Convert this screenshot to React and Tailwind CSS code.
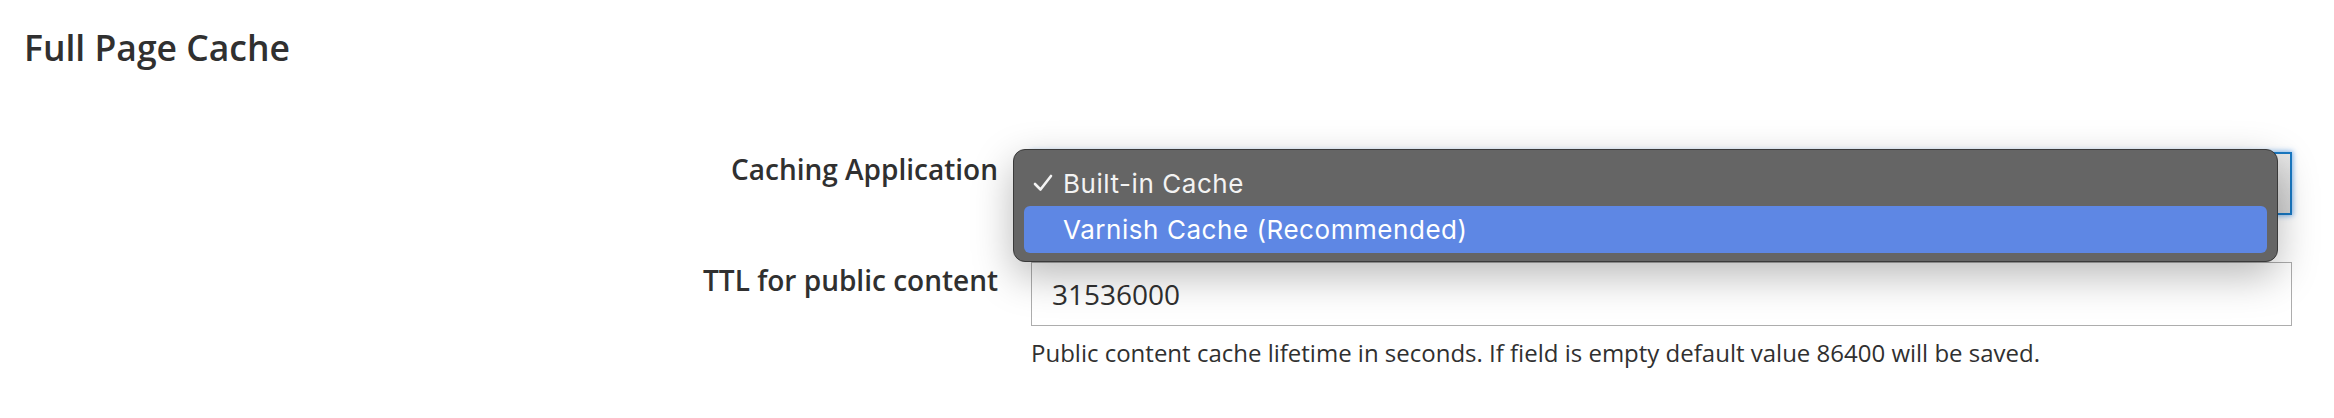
export default function App() {
  return (
    <div className="w-full h-[418px] bg-white text-[#303030] font-['Open_Sans',sans-serif]">
      <h2 className="pl-[24px] pt-[30px] text-[35.5px] leading-[34px] font-semibold">Full Page Cache</h2>

      <div className="mt-[88px] grid grid-cols-[998px_1261px] gap-x-[33px] gap-y-[47px]">
        <div className="pt-[3px] text-right text-[28px] leading-[28px] font-semibold">Caching Application</div>
        <div className="relative h-[63px]">
          {/* focused select, mostly hidden by the open menu */}
          <div className="flex h-full border-2 border-[#1979c3] bg-white shadow-[0_0_5px_1px_rgba(30,120,220,0.55)]">
            <div className="flex-1"></div>
            <div className="w-[62px] bg-gradient-to-b from-[#e8e8e8] to-[#d6d6d6]"></div>
          </div>

          <div className="absolute left-[-18px] top-[-3px] w-[1265px] h-[113px] rounded-[12px] border border-[#3a3a3a] bg-[#656565] px-[10px] pt-[10px] shadow-[0_14px_40px_rgba(0,0,0,0.28)] font-['Inter',sans-serif] text-[26px] tracking-[0.55px] text-[#f3f3f3]">
            <div className="flex h-[46px] items-center pl-[9px]">
              <svg width="20" height="18" viewBox="0 0 20 18" className="mr-[10px]">
                <polyline points="2,10 7.5,15.5 18,2" fill="none" stroke="#f3f3f3" strokeWidth="2.6" strokeLinecap="round" strokeLinejoin="round" />
              </svg>
              <span>Built-in Cache</span>
            </div>
            <div className="flex h-[47px] items-center rounded-[6px] bg-[#5e87e4] pl-[39px] text-white">
              Varnish Cache (Recommended)
            </div>
          </div>
        </div>

        <div className="pt-[4px] text-right text-[28px] leading-[28px] font-semibold">TTL for public content</div>
        <div>
          <div className="flex h-[64px] items-center border border-[#adadad] bg-white pl-[20px] text-[28px]">31536000</div>
          <p className="mt-[9px] text-[24px] leading-[36px]">
            Public content cache lifetime in seconds. If field is empty default value 86400 will be saved.
          </p>
        </div>
      </div>
    </div>
  );
}
